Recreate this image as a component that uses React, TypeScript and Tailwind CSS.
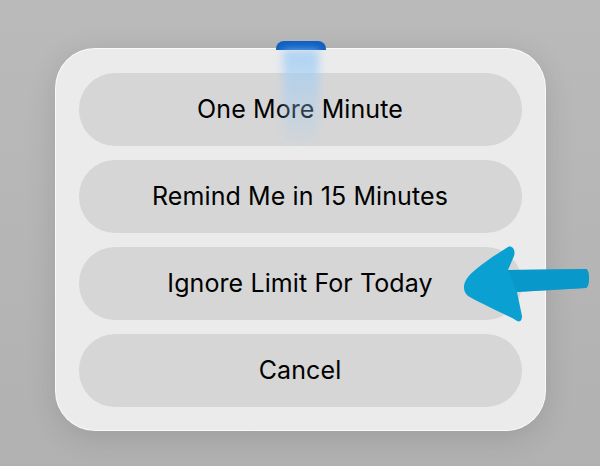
export default function App() {
  const options = ['One More Minute', 'Remind Me in 15 Minutes', 'Ignore Limit For Today', 'Cancel']

  return (
    <div className="relative h-[466px] w-[600px] overflow-hidden bg-gradient-to-b from-[#bababa] to-[#b1b1b1] font-['Inter','Roboto',sans-serif]">
      <div className="flex justify-center pt-[48px]">
        <div className="relative flex w-[491px] flex-col gap-[14px] rounded-[40px] border border-white/70 bg-[#ebebeb] px-[23px] pb-[23px] pt-[24px] shadow-[0_6px_30px_rgba(0,0,0,0.12)]">
          {options.map((label) => (
            <div
              key={label}
              className="flex h-[73px] items-center justify-center rounded-[36px] bg-[#d6d6d6] text-[25px] tracking-[0.1px] text-black"
            >
              {label}
            </div>
          ))}
          <div className="pointer-events-none absolute left-[220px] top-[-8px] h-[9px] w-[50px] rounded-t-[8px] bg-[#0d5fc2]" />
          <div className="pointer-events-none absolute left-[227px] top-[1px] h-[100px] w-[36px] rounded-b-full bg-gradient-to-b from-[#9dcdf7] to-[#b9dbf7]/0 opacity-80 blur-[4px]" />
        </div>
      </div>
      <svg className="absolute left-[455px] top-[240px]" width="140" height="90" viewBox="455 240 140 90">
        <path
          d="M466 280 C470 272 490 258 508 247 C512 245 516 250 514 256 L508 270 L586 269 C590 270 590 286 586 288 L517 292 L522 316 C522 322 519 323 514 319 C500 312 482 304 468 296 C463 292 463 285 466 280 Z"
          fill="#0aa0d2"
        />
        <path d="M508 270 L586 269 C590 270 590 286 586 288 L517 292 Z" fill="#0793c4" opacity="0.6" />
      </svg>
    </div>
  )
}
